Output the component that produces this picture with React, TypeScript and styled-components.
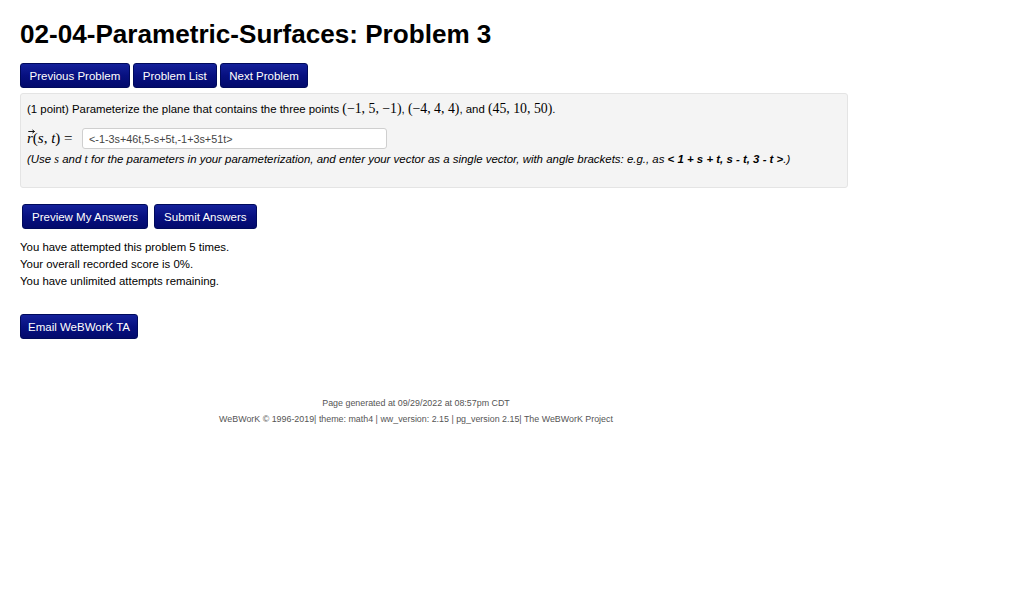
import React from "react";
import styled, { createGlobalStyle } from "styled-components";

const Global = createGlobalStyle`
  html, body { margin: 0; padding: 0; background: #fff; }
  body { font-family: "Liberation Sans", Arial, Helvetica, sans-serif; color: #000; }
`;

const Page = styled.div`
  width: 1024px;
  min-height: 597px;
  box-sizing: border-box;
  padding: 19px 0 0 20px;
`;

const Title = styled.h1`
  margin: 0;
  font-size: 26.1px;
  line-height: 30px;
  font-weight: bold;
`;

const NavBar = styled.div`
  display: flex;
  gap: 3px;
  margin-top: 14px;
`;

const Button = styled.button<{ $px?: number }>`
  font-family: "Liberation Sans", Arial, Helvetica, sans-serif;
  font-size: 11.5px;
  color: #fff;
  height: 25px;
  padding: 0 ${(p) => p.$px ?? 9}px;
  border: 1px solid #000a5c;
  border-radius: 3px;
  background: linear-gradient(to bottom, #14219a 0%, #071080 50%, #020a6c 100%);
  cursor: pointer;
  white-space: nowrap;
`;

const ProblemBox = styled.div`
  width: 828px;
  box-sizing: border-box;
  margin-top: 5px;
  background: #f4f4f4;
  border: 1px solid #e4e4e4;
  border-radius: 3px;
  padding: 7px 6px 0 6px;
  height: 95px;
`;

const Statement = styled.div`
  font-size: 11.4px;
  line-height: 16px;
  white-space: nowrap;
`;

const Math = styled.span`
  font-family: "Liberation Serif", "Times New Roman", serif;
  font-size: 13.8px;
`;

const AnswerRow = styled.div`
  display: flex;
  align-items: center;
  margin-top: 11px;
`;

const VecLabel = styled.span`
  font-family: "Liberation Serif", "Times New Roman", serif;
  font-size: 15px;
  width: 55px;
  display: inline-flex;
  align-items: baseline;
  white-space: pre;
`;

const VecR = styled.span`
  position: relative;
  font-style: italic;
  svg {
    position: absolute;
    left: 0.5px;
    top: -1px;
  }
`;

const Ital = styled.i`
  font-family: "Liberation Serif", "Times New Roman", serif;
`;

const AnswerInput = styled.input`
  width: 305px;
  height: 21px;
  box-sizing: border-box;
  border: 1px solid #cfcfcf;
  border-radius: 3px;
  background: #fff;
  font-family: "Liberation Sans", Arial, sans-serif;
  font-size: 10.8px;
  color: #444;
  padding: 0 6px;
  outline: none;
`;

const Help = styled.div`
  font-size: 11.45px;
  font-style: italic;
  margin-top: 3px;
  line-height: 14px;
  white-space: nowrap;
  b { font-weight: bold; }
`;

const MathSm = styled.span`
  font-family: "Liberation Serif", "Times New Roman", serif;
  font-size: 12px;
`;

const SubmitBar = styled.div`
  display: flex;
  gap: 6px;
  margin-top: 16px;
  margin-left: 2px;
`;

const Status = styled.div`
  margin-top: 10px;
  font-size: 11.4px;
  line-height: 17px;
`;

const EmailWrap = styled.div`
  margin-top: 24px;
`;

const Footer = styled.footer`
  width: 792px;
  margin-top: 56px;
  text-align: center;
  font-size: 8.9px;
  color: #555;
  line-height: 16px;
`;

export default function App() {
  return (
    <>
      <Global />
      <Page>
        <Title>02-04-Parametric-Surfaces: Problem 3</Title>
        <NavBar>
          <Button $px={8.5}>Previous Problem</Button>
          <Button $px={9}>Problem List</Button>
          <Button $px={8.5}>Next Problem</Button>
        </NavBar>
        <ProblemBox>
          <Statement>
            (1 point) Parameterize the plane that contains the three points{" "}
            <Math>(−1, 5, −1)</Math>, <Math>(−4, 4, 4)</Math>, and <Math>(45, 10, 50)</Math>.
          </Statement>
          <AnswerRow>
            <VecLabel>
              <VecR>
                r
                <svg width="7" height="5" viewBox="0 0 7 5">
                  <path d="M0.3 2.5 H6.3 M4.4 0.9 L6.5 2.5 L4.4 4.1" stroke="#000" strokeWidth="0.9" fill="none" />
                </svg>
              </VecR>
              <span>(</span>
              <Ital>s</Ital>
              <span>, </span>
              <Ital>t</Ital>
              <span>) =</span>
            </VecLabel>
            <AnswerInput defaultValue="<-1-3s+46t,5-s+5t,-1+3s+51t>" />
          </AnswerRow>
          <Help>
            (Use <MathSm><i>s</i></MathSm> and <MathSm><i>t</i></MathSm> for the parameters in your parameterization, and enter your vector as a single vector, with angle brackets: e.g., as <b>&lt; 1 + s + t, s - t, 3 - t &gt;</b>.)
          </Help>
        </ProblemBox>
        <SubmitBar>
          <Button $px={9}>Preview My Answers</Button>
          <Button $px={9}>Submit Answers</Button>
        </SubmitBar>
        <Status>
          <div>You have attempted this problem 5 times.</div>
          <div>Your overall recorded score is 0%.</div>
          <div>You have unlimited attempts remaining.</div>
        </Status>
        <EmailWrap>
          <Button $px={7}>Email WeBWorK TA</Button>
        </EmailWrap>
        <Footer>
          <div>Page generated at 09/29/2022 at 08:57pm CDT</div>
          <div>WeBWorK © 1996-2019| theme: math4 | ww_version: 2.15 | pg_version 2.15| The WeBWorK Project</div>
        </Footer>
      </Page>
    </>
  );
}
